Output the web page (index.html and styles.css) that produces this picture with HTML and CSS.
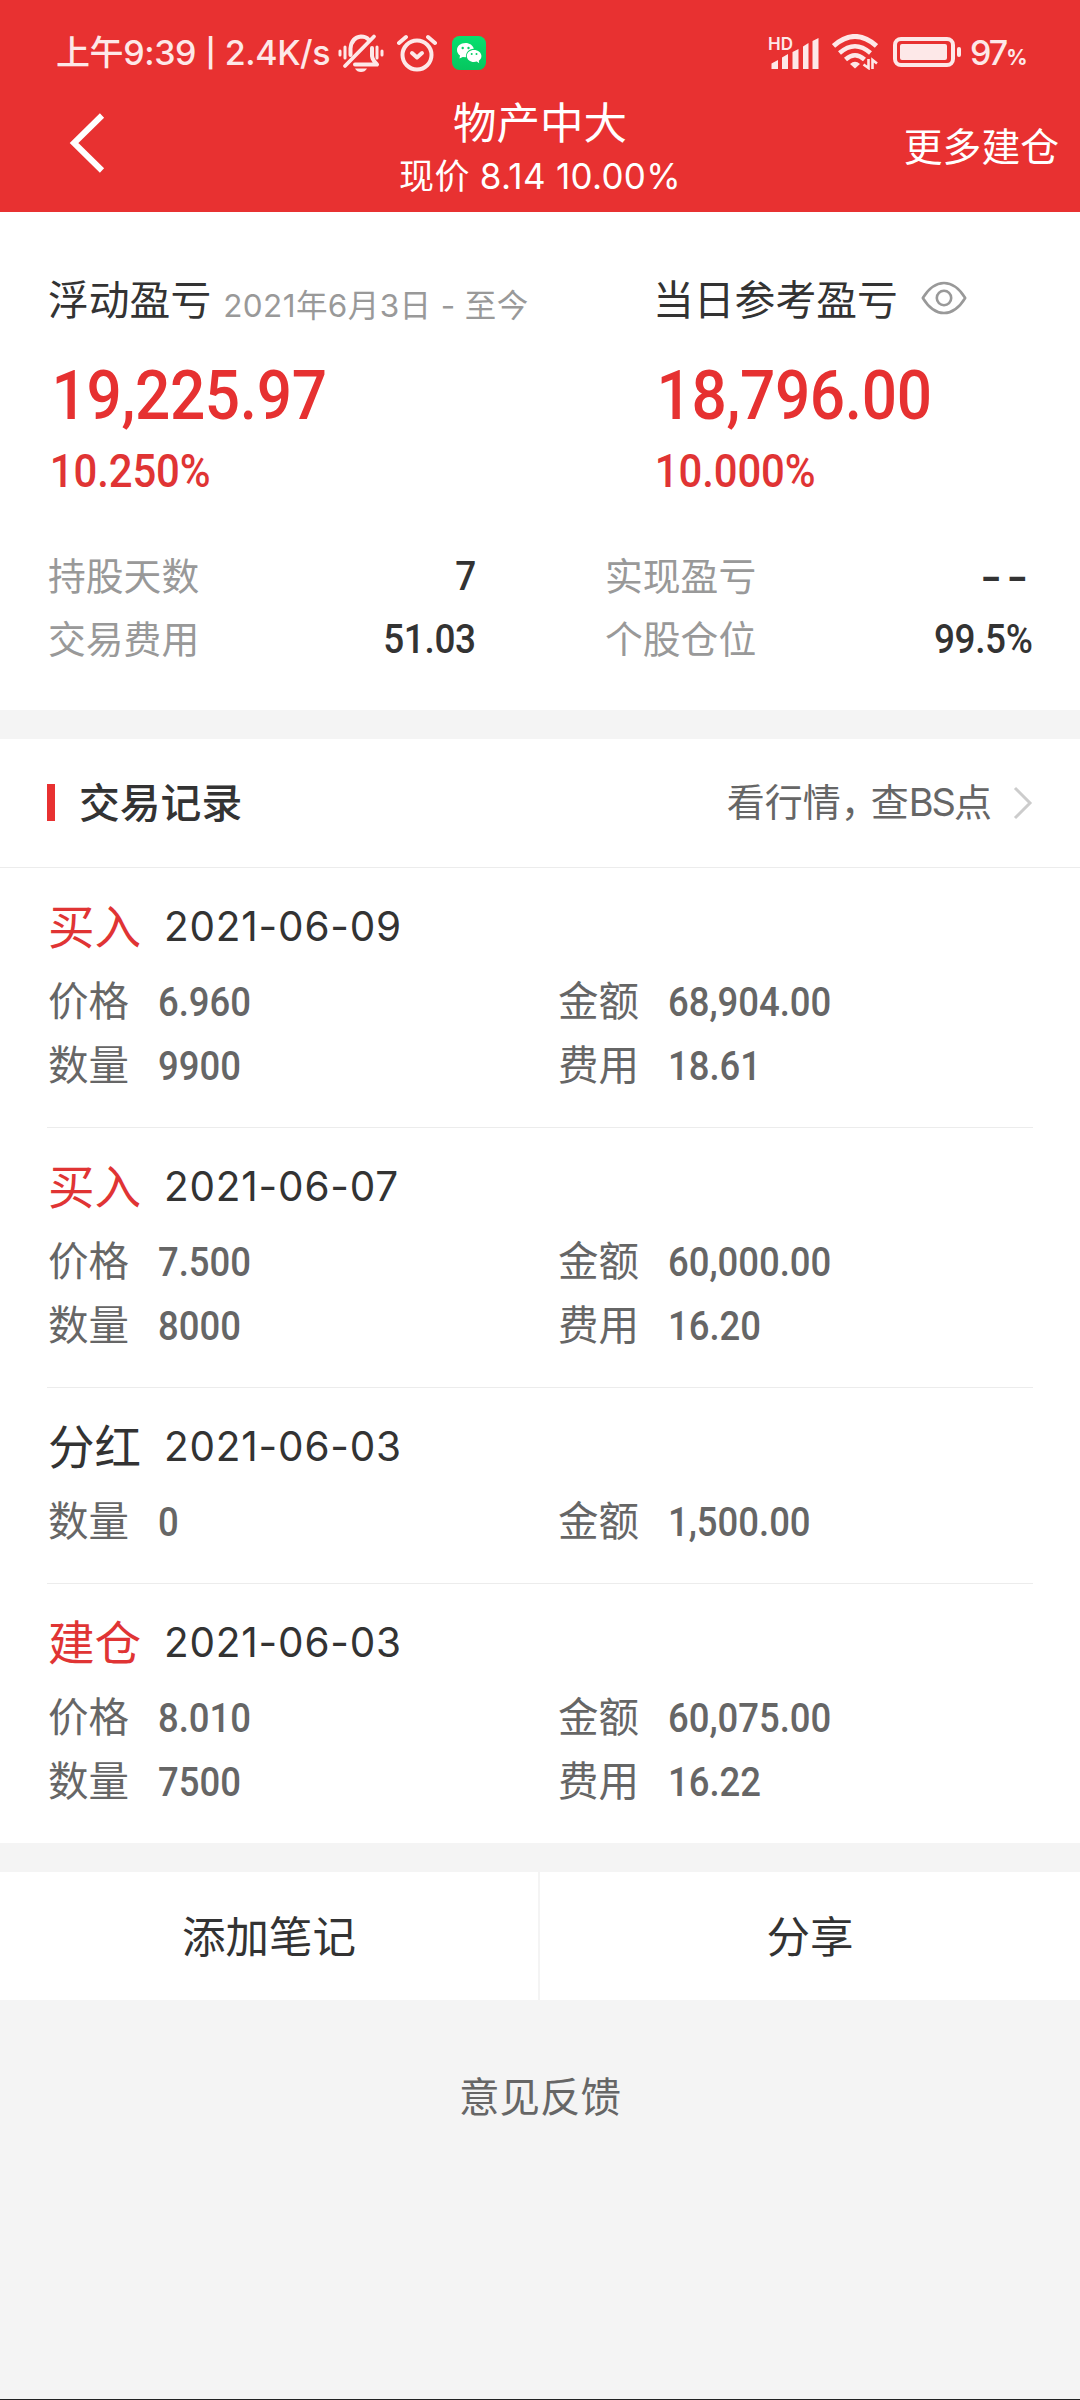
FILE: index.html
```html
<!DOCTYPE html>
<html lang="zh-CN">
<head>
<meta charset="utf-8">
<title>物产中大</title>
<link rel="stylesheet" href="styles.css">
</head>
<body>
<div class="screen">
  <header class="header">
    <div class="status">
      <div class="status-left">
        <span class="clock">上午9:39 <span class="bar">|</span> 2.4K/s</span>
        <svg class="ico-bell" width="46" height="40" viewBox="0 0 46 40" fill="none" stroke="#fde8e8" stroke-linecap="round" stroke-linejoin="round">
          <path d="M2 18v4M7 14v11M39 14v11M44 18v4" stroke-width="3"/>
          <path d="M12.500 22V15.500Q13.500 4.500 23 3.500Q28 3.500 30.500 6.500M34 15V23Q34.500 27 39 31.500H17" stroke-width="4"/>
          <path d="M36 3.500L7 33" stroke-width="3.800"/>
          <path d="M17 35.500H29Q27 39 23 39Q19 39 17 35.500Z" fill="#fde8e8" stroke="none"/>
        </svg>
        <svg class="ico-alarm" width="40" height="38" viewBox="0 0 40 38" fill="none" stroke="#fde8e8" stroke-width="4" stroke-linecap="round" stroke-linejoin="round">
          <circle cx="20" cy="21" r="14.500"/>
          <path d="M2 9L9 3M38 9L31 3"/>
          <path d="M15 19L20 23.500L25 19"/>
        </svg>
        <svg class="ico-chat" width="34" height="34" viewBox="0 0 34 34">
          <defs><linearGradient id="g" x1="0" y1="0" x2="0" y2="1"><stop offset="0" stop-color="#07e06e"/><stop offset="1" stop-color="#06c65f"/></linearGradient></defs>
          <rect width="34" height="34" rx="7.500" fill="url(#g)"/>
          <path d="M13.500 7C8.500 7 5 10 5 14C5 16.300 6.200 18.200 8 19.500L7.500 22.500L10.700 21L14 21.200C13.500 16.500 17 13 21.800 12.800C21 9.300 17.600 7 13.500 7Z" fill="#fff"/>
          <path d="M22 14C18 14 14.800 16.600 14.800 20C14.800 23.400 18 26 22 26L24.800 25.600L27.200 27.200L26.800 24.700C28.500 23.600 29.400 22 29.400 20C29.400 16.600 26 14 22 14Z" fill="#fff"/>
          <g fill="#07cf66"><circle cx="10.700" cy="12" r="1.200"/><circle cx="16.500" cy="12" r="1.200"/><circle cx="19.700" cy="18" r="1"/><circle cx="24.500" cy="18" r="1"/></g>
        </svg>
      </div>
      <div class="status-right">
        <span class="signal">
          <svg width="50" height="34" viewBox="0 0 50 34" fill="#fde8e8">
            <path d="M2.500 34V28.500L9 25V34ZM13 34V22.500L19 19V34ZM23.500 34V17L29.500 14V34ZM34 34V11.500L39.500 8V34ZM43.500 34V6L49.500 3V34Z"/>
          </svg>
          <span class="hd">HD</span>
        </span>
        <svg class="ico-wifi" width="46" height="36" viewBox="0 0 46 36" fill="none" stroke="#fde8e8">
          <path d="M1.500 12Q23 -7 44.500 12" stroke-width="5"/>
          <path d="M7.500 19Q23 5.500 38.500 19" stroke-width="4.500"/>
          <path d="M13.500 25.500Q23 17 32.500 25.500" stroke-width="4.500"/>
          <path d="M18 30Q23 25.500 28 30L23 34.500Z" fill="#fde8e8" stroke="none"/>
          <path d="M36.500 25V34L31.500 30.500M40.500 35V26L45 29.500" stroke-width="2.600"/>
        </svg>
        <svg class="ico-batt" width="69" height="30" viewBox="0 0 69 30">
          <rect x="2" y="2" width="58" height="26" rx="6" fill="none" stroke="#fde8e8" stroke-width="4"/>
          <rect x="7" y="7" width="47" height="16" rx="2" fill="#fde8e8"/>
          <rect x="64" y="10" width="4" height="10" rx="2" fill="#fde8e8"/>
        </svg>
        <span class="battery-text">97<small>%</small></span>
      </div>
    </div>
    <nav class="nav">
      <svg class="back" width="36" height="60" viewBox="0 0 36 60" fill="none" stroke="#fff" stroke-width="6"><path d="M33 2.500L5 30L33 57.500"/></svg>
      <div class="title">
        <h1>物产中大</h1>
        <p>现价 8.14 10.00%</p>
      </div>
      <a class="more">更多建仓</a>
    </nav>
  </header>

  <section class="summary">
    <div class="totals">
      <div class="total">
        <div class="total-label">浮动盈亏<span class="range">2021年6月3日 - 至今</span></div>
        <div class="amount">19,225.97</div>
        <div class="percent">10.250%</div>
      </div>
      <div class="total">
        <div class="total-label">当日参考盈亏
          <svg class="eye" width="46" height="34" viewBox="0 0 46 34" fill="none" stroke="#999" stroke-width="2.600"><path d="M1.800 17Q11 2 23 2Q35 2 44.200 17Q35 32 23 32Q11 32 1.800 17Z" stroke-linejoin="round"/><circle cx="23" cy="17" r="7.200"/></svg>
        </div>
        <div class="amount">18,796.00</div>
        <div class="percent">10.000%</div>
      </div>
    </div>
    <dl class="stats">
      <div class="stat"><dt>持股天数</dt><dd>7</dd></div>
      <div class="stat"><dt>实现盈亏</dt><dd class="empty">--</dd></div>
      <div class="stat"><dt>交易费用</dt><dd>51.03</dd></div>
      <div class="stat"><dt>个股仓位</dt><dd>99.5%</dd></div>
    </dl>
  </section>

  <section class="records">
    <div class="records-head">
      <h2>交易记录</h2>
      <a class="quote"><span>看行情<span class="comma">，</span>查<span class="latin">BS</span>点</span>
        <svg width="20" height="34" viewBox="0 0 20 34" fill="none" stroke="#ccc" stroke-width="3"><path d="M2 2L17 17L2 32"/></svg>
      </a>
    </div>
    <article class="record">
      <div class="record-title"><b class="buy">买入</b><time>2021-06-09</time></div>
      <dl class="fields">
        <div><dt>价格</dt><dd>6.960</dd></div><div><dt>金额</dt><dd>68,904.00</dd></div>
        <div><dt>数量</dt><dd>9900</dd></div><div><dt>费用</dt><dd>18.61</dd></div>
      </dl>
    </article>
    <article class="record">
      <div class="record-title"><b class="buy">买入</b><time>2021-06-07</time></div>
      <dl class="fields">
        <div><dt>价格</dt><dd>7.500</dd></div><div><dt>金额</dt><dd>60,000.00</dd></div>
        <div><dt>数量</dt><dd>8000</dd></div><div><dt>费用</dt><dd>16.20</dd></div>
      </dl>
    </article>
    <article class="record">
      <div class="record-title"><b>分红</b><time>2021-06-03</time></div>
      <dl class="fields">
        <div><dt>数量</dt><dd>0</dd></div><div><dt>金额</dt><dd>1,500.00</dd></div>
      </dl>
    </article>
    <article class="record">
      <div class="record-title"><b class="buy">建仓</b><time>2021-06-03</time></div>
      <dl class="fields">
        <div><dt>价格</dt><dd>8.010</dd></div><div><dt>金额</dt><dd>60,075.00</dd></div>
        <div><dt>数量</dt><dd>7500</dd></div><div><dt>费用</dt><dd>16.22</dd></div>
      </dl>
    </article>
  </section>

  <div class="actions">
    <a>添加笔记</a>
    <a>分享</a>
  </div>
  <footer class="feedback">意见反馈</footer>
</div>
</body>
</html>
```
FILE: styles.css
```css
* { box-sizing: border-box; margin: 0; padding: 0; }
body {
  background: #f4f4f4;
  color: #333;
  font-family: Inter, "Noto Sans CJK SC", sans-serif;
  font-weight: 400;
}
svg { display: block; flex: none; }
.screen {
  width: 1080px;
  height: 2400px;
  display: flex;
  flex-direction: column;
  border-bottom: 1px solid #222;
  white-space: nowrap;
}

.header { height: 212px; flex: none; background: #e83131; color: #fff; }
.status {
  height: 88px;
  padding: 17px 54px 0 56px;
  display: flex;
  justify-content: space-between;
  color: #fde8e8;
}
.status-left, .status-right { display: flex; height: 70px; align-items: center; }
.status-left { height: 72px; }
.clock { font-size: 34px; font-weight: 500; letter-spacing: -0.4px; width: 282px; line-height: 72px; }
.bar { display: inline-block; transform: scaleY(0.82); }
.ico-alarm { margin-left: 13px; }
.ico-chat { margin-left: 15px; }
.signal { position: relative; }
.hd { position: absolute; left: -1px; top: 0; font-size: 17px; font-weight: 600; line-height: 18px; }
.ico-wifi { margin-left: 13px; }
.ico-batt { margin-left: 15px; }
.battery-text { margin-left: 8px; width: 56px; font-size: 34px; font-weight: 500; letter-spacing: -2px; }
.battery-text small { font-size: 21px; font-weight: 700; letter-spacing: 0; }

.nav {
  height: 124px;
  padding: 0 21px 0 69px;
  display: grid;
  grid-template-columns: 261px 1fr 310px;
}
.back { margin-top: 25px; }
.title { text-align: center; padding: 8px 0 0 1px; }
.title h1 { font-size: 43.500px; font-weight: 400; line-height: 54px; }
.title p { font-size: 35px; line-height: 52px; letter-spacing: 0.3px; }
.more { font-size: 38.800px; line-height: 118px; text-align: right; }

.summary { height: 498px; flex: none; background: #fff; padding: 58px 48px 0; }
.totals { display: grid; grid-template-columns: 605px 1fr; }
.total-label { font-size: 40.800px; line-height: 60px; height: 84px; display: flex; align-items: center; padding-bottom: 24px; }
.range { font-size: 31.500px; letter-spacing: 0.4px; color: #999; margin: 12px 0 0 12px; }
.eye { margin: -4px 0 0 23px; }

/* Narrow numerals for money and ratios */
.amount, .percent, dd {
  font-family: Roboto, sans-serif;
  font-weight: 500;
  transform: scaleX(0.9);
  transform-origin: left center;
}
.amount { font-size: 69px; line-height: 80px; letter-spacing: -0.400px; color: #e63131; padding: 2px 0 0 4px; }
.percent { font-size: 46.500px; line-height: 60px; letter-spacing: -0.100px; color: #e03434; padding: 5px 0 0 2px; height: 66px; }
.stats { display: grid; grid-template-columns: 428px 427px; column-gap: 129px; margin-top: 43px; }
.stat { display: flex; justify-content: space-between; height: 63px; line-height: 63px; }
.stat dt { font-size: 37.800px; color: #999; }
.stat dd { font-size: 41px; letter-spacing: -0.400px; transform-origin: right center; }
.stat .empty { font-family: Inter, sans-serif; font-size: 46px; letter-spacing: 4px; transform: scaleX(1.04); margin-right: -1px; }

.records { background: #fff; margin-top: 29px; flex: none; }
.records-head {
  height: 129px;
  padding: 0 47px;
  border-bottom: 1px solid #ececec;
  display: flex;
  justify-content: space-between;
  align-items: center;
}
.records-head h2 { display: flex; align-items: center; font-size: 40.800px; font-weight: 500; line-height: 56px; padding-bottom: 1px; }
.records-head h2::before { content: ""; width: 8px; height: 37px; background: #e83131; margin-right: 24px; }
.quote { display: flex; align-items: center; gap: 21px; font-size: 38px; line-height: 56px; color: #666; }
.quote > span { padding-bottom: 2px; }
.comma { letter-spacing: -8px; }
.latin { letter-spacing: -2px; }

.record { margin: 0 47px; padding: 24px 1px 0; height: 260px; border-bottom: 1px solid #ececec; }
.record:nth-of-type(3) { height: 196px; }
.record:last-child { border-bottom: 0; height: 259px; }
.record-title { display: flex; height: 78px; line-height: 70px; }
.record-title b { font-size: 46.600px; font-weight: 400; width: 116px; }
.record-title .buy { color: #e03434; }
.record-title time { font-size: 40.500px; letter-spacing: 0.800px; }
.fields { display: grid; grid-template-columns: 510px 1fr; color: #666; }
.fields div { display: flex; height: 64px; line-height: 64px; }
.fields dt { font-size: 40.500px; width: 110px; }
.fields dd { font-size: 40.500px; letter-spacing: 0; }

.actions {
  height: 128px;
  flex: none;
  margin-top: 29px;
  display: grid;
  grid-template-columns: 538px 540px;
  column-gap: 2px;
  line-height: 128px;
  text-align: center;
  font-size: 43.500px;
}
.actions a { background: #fff; padding-top: 1px; height: 128px; overflow: hidden; }
.feedback { margin-top: 67px; line-height: 62px; text-align: center; font-size: 40.500px; color: #666; }
```
